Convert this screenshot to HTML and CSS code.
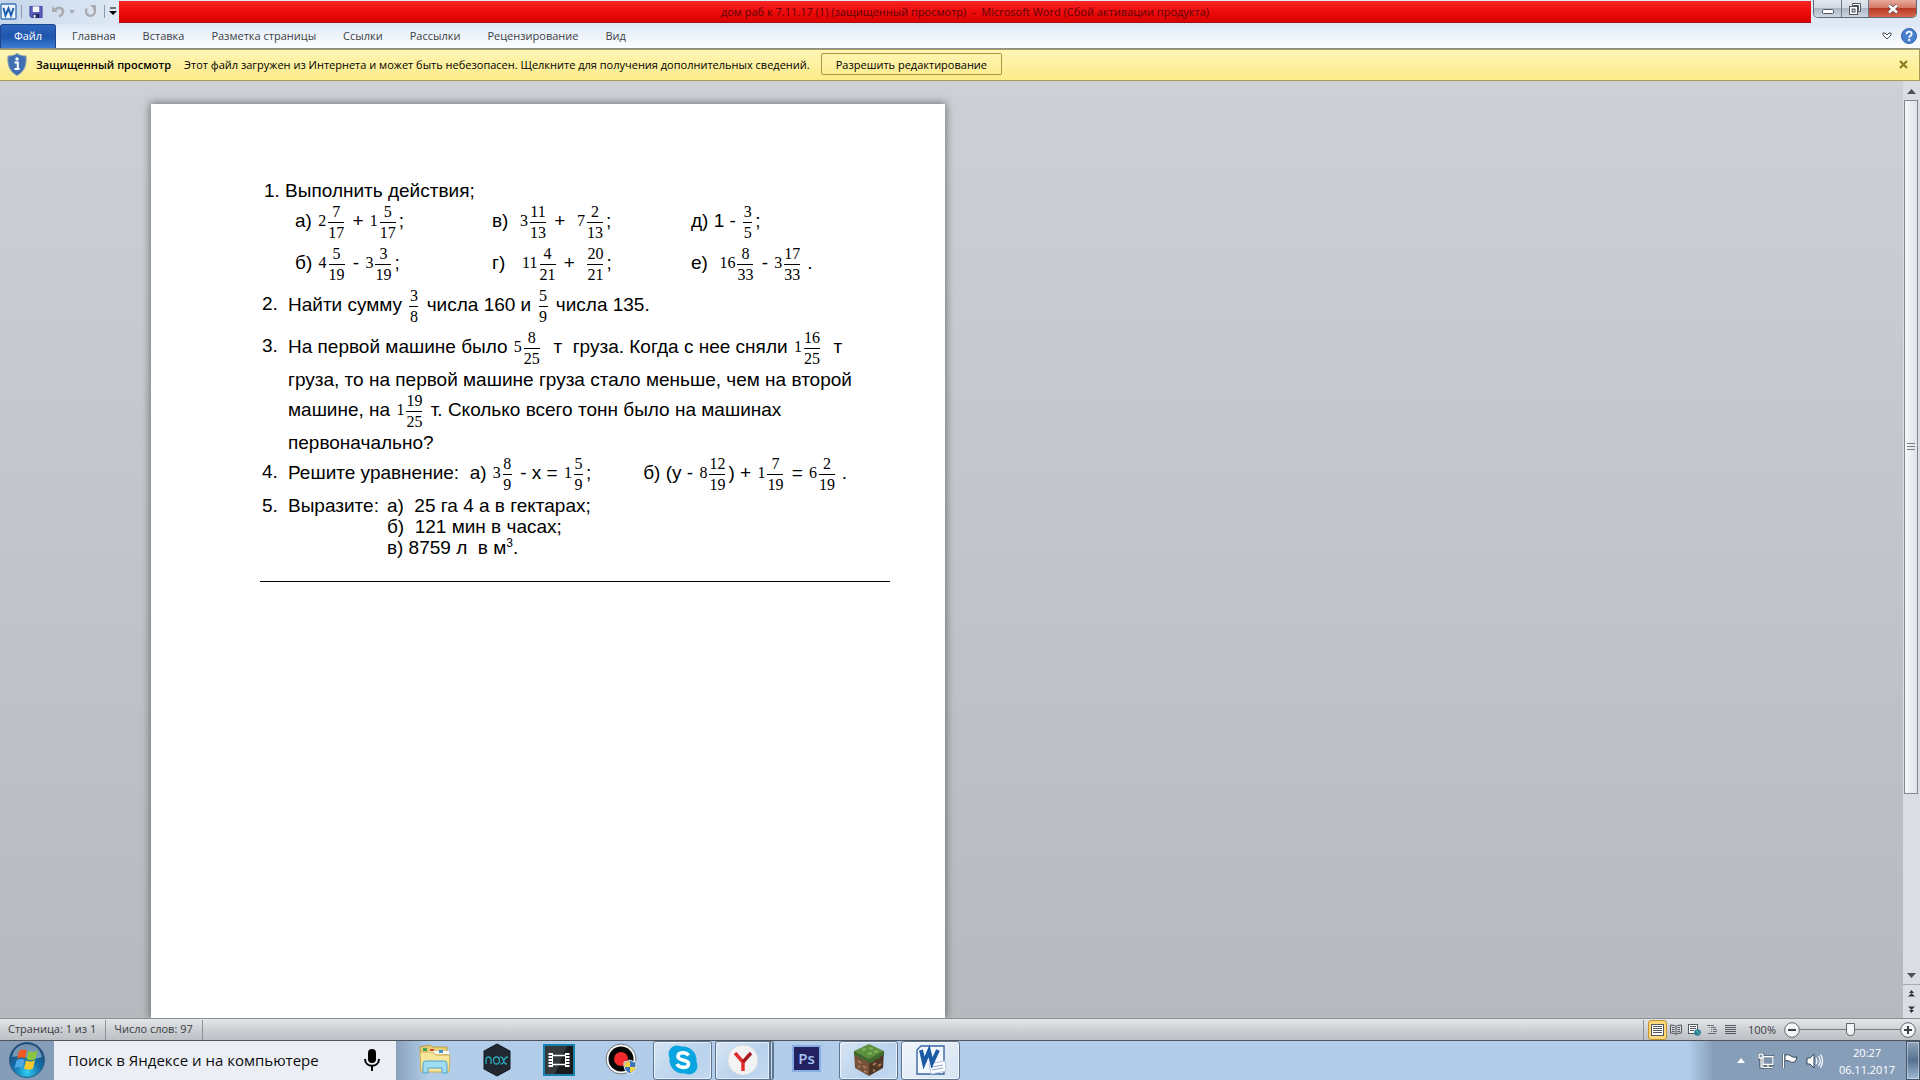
FILE: index.html
```html
<!DOCTYPE html>
<html lang="ru">
<head>
    <meta charset="UTF-8">
    <meta name="viewport" content="width=device-width, initial-scale=1.0">
    <title>дом раб к 7.11.17 (1) - Microsoft Word</title>
    <link rel="stylesheet" href="styles.css">
</head>
<body>
    <header class="titlebar">
        <div class="quick">
            <svg class="word-icon" width="17" height="17" viewBox="0 0 17 17"><rect x="1" y="1" width="15" height="15" rx="1" fill="#eef5fc" stroke="#3d77b8" stroke-width="1.4"/><path d="M3.5 5l2 7.5L8.500 5.500l2.500 7L13.500 5" fill="none" stroke="#1b5fae" stroke-width="2"/></svg>
            <span class="sep"></span>
            <button class="tool" aria-label="Сохранить"><svg width="14" height="14" viewBox="0 0 15 14"><path d="M1 1h13v12H2.500L1 11.500z" fill="#5a5fc0" stroke="#3b3f93"/><path d="M4 1h7v6H4z" fill="#f4f6fd"/><path d="M4 9h7v4H4z" fill="#26295f"/><path d="M5 10h2v3H5z" fill="#fff"/></svg></button>
            <button class="tool undo" aria-label="Отменить"><svg width="13" height="13" viewBox="0 0 13 13"><path d="M3 4.500c4-3 8-1.500 8 2 0 2.500-2 4-4 5" fill="none" stroke="#a9acb1" stroke-width="2.600"/><path d="M0 1v6h6z" fill="#a9acb1"/></svg></button>
            <svg width="6" height="4" viewBox="0 0 6 4"><path d="M0 0h6L3 4z" fill="#a9acb1"/></svg>
            <button class="tool undo" aria-label="Повторить"><svg width="13" height="13" viewBox="0 0 13 13"><path d="M3 3.500a4.500 4.500 0 1 0 6.500-.5" fill="none" stroke="#a9acb1" stroke-width="2.400"/><path d="M6 0h6v6z" fill="#a9acb1"/></svg></button>
            <span class="sep last"></span>
            <svg width="8" height="9" viewBox="0 0 8 9"><path d="M1 1h6" stroke="#000"/><path d="M0 4h8L4 8z" fill="#000"/></svg>
        </div>
        <div class="title">дом раб к 7.11.17 (1) (защищенный просмотр)&nbsp; -&nbsp; Microsoft Word (Сбой активации продукта)</div>
        <div class="window-buttons">
            <button class="win-min" aria-label="Свернуть"><svg width="12" height="6" viewBox="0 0 12 6"><rect x=".5" y="1.500" width="11" height="4" rx="1" fill="#fff" stroke="#50555e"/></svg></button>
            <button class="win-max" aria-label="Развернуть"><svg width="12" height="12" viewBox="0 0 12 12"><path d="M3.500.5h8v8h-2v-6h-6z" fill="#fff" stroke="#50555e"/><rect x=".5" y="3.500" width="8" height="8" fill="#fff" stroke="#50555e"/><rect x="3" y="6" width="3" height="3" fill="#c8ccd3" stroke="#50555e"/></svg></button>
            <button class="win-close" aria-label="Закрыть"><svg width="12" height="10" viewBox="0 0 12 10"><path d="M2 1.500l8 7M10 1.500l-8 7" stroke="#5b4a50" stroke-width="4"/><path d="M2 1.500l8 7M10 1.500l-8 7" stroke="#fff" stroke-width="2.500"/></svg></button>
        </div>
    </header>

    <nav class="tabs">
        <button class="tab file">Файл</button>
        <button class="tab">Главная</button>
        <button class="tab">Вставка</button>
        <button class="tab">Разметка страницы</button>
        <button class="tab">Ссылки</button>
        <button class="tab">Рассылки</button>
        <button class="tab">Рецензирование</button>
        <button class="tab">Вид</button>
        <div class="tabs-right">
            <svg width="10" height="8" viewBox="0 0 10 8"><path d="M1 1h2l2 2 2-2h2v2L5 7 1 3z" fill="#fff" stroke="#4a4e55"/></svg>
            <button class="help" aria-label="Справка"><svg width="16" height="16" viewBox="0 0 16 16"><circle cx="8" cy="8" r="7.500" fill="#4a7fd0" stroke="#3563ae"/><path d="M5.500 6.200c0-3.500 5.200-3.200 5.200-.3 0 1.800-2.500 1.800-2.500 3.900" fill="none" stroke="#fff" stroke-width="1.800"/><circle cx="8.200" cy="12" r="1.200" fill="#fff"/></svg></button>
        </div>
    </nav>

    <div class="notice">
        <svg width="20" height="23" viewBox="0 0 20 23"><path d="M10 .5c3 2 6 2.500 9 2.500.8 9-1.500 15.500-9 19.500C2.500 18.500.2 12 1 3c3 0 6-.5 9-2.500z" fill="#3f6fb0" stroke="#8ba3b5"/><circle cx="10" cy="6" r="1.700" fill="#fff"/><path d="M7.500 9.500h3.300V16M7.500 16h5" fill="none" stroke="#fff" stroke-width="2"/></svg>
        <strong>Защищенный просмотр</strong>
        <span>Этот файл загружен из Интернета и может быть небезопасен. Щелкните для получения дополнительных сведений.</span>
        <button class="enable">Разрешить редактирование</button>
        <button class="notice-close" aria-label="Закрыть"><svg width="9" height="9" viewBox="0 0 9 9"><path d="M1 1l7 7M8 1L1 8" stroke="#8c7a1c" stroke-width="2.200"/></svg></button>
    </div>

    <main class="workspace">
        <div class="canvas">
            <article class="page">
                <div class="line first">1. Выполнить действия;</div>
                <div class="examples">
                    <div class="line tall">а) <i>2</i><b><u>7</u><u>17</u></b>&nbsp;+ <i>1</i><b><u>5</u><u>17</u></b>;</div>
                    <div class="line tall">в)&nbsp; <i>3</i><b><u>11</u><u>13</u></b>&nbsp;+&nbsp; <i>7</i><b><u>2</u><u>13</u></b>;</div>
                    <div class="line tall">д) 1 - <b><u>3</u><u>5</u></b>;</div>
                    <div class="line tall">б) <i>4</i><b><u>5</u><u>19</u></b>&nbsp;- <i>3</i><b><u>3</u><u>19</u></b>;</div>
                    <div class="line tall">г)&nbsp;&nbsp; <i>11</i><b><u>4</u><u>21</u></b>&nbsp;+&nbsp; <b><u>20</u><u>21</u></b>;</div>
                    <div class="line tall">е)&nbsp; <i>16</i><b><u>8</u><u>33</u></b>&nbsp;- <i>3</i><b><u>17</u><u>33</u></b>&thinsp;.</div>
                </div>
                <div class="task">
                    <span class="num">2.</span>
                    <div class="line tall">Найти сумму <b><u>3</u><u>8</u></b>&nbsp;числа 160 и <b><u>5</u><u>9</u></b>&nbsp;числа 135.</div>
                </div>
                <div class="task">
                    <span class="num">3.</span>
                    <div>
                        <div class="line tall">На первой машине было <i>5</i><b><u>8</u><u>25</u></b>&nbsp; т&nbsp; груза. Когда с нее сняли <i>1</i><b><u>16</u><u>25</u></b>&nbsp; т</div>
                        <div class="line">груза, то на первой машине груза стало меньше, чем на второй</div>
                        <div class="line tall">машине, на <i>1</i><b><u>19</u><u>25</u></b>&nbsp;т. Сколько всего тонн было на машинах</div>
                        <div class="line">первоначально?</div>
                    </div>
                </div>
                <div class="task">
                    <span class="num">4.</span>
                    <div class="equations">
                        <div class="line tall">Решите уравнение:&nbsp; а) <i>3</i><b><u>8</u><u>9</u></b>&nbsp;- х = <i>1</i><b><u>5</u><u>9</u></b>;</div>
                        <div class="line tall">б) (у - <i>8</i><b><u>12</u><u>19</u></b>) + <i>1</i><b><u>7</u><u>19</u></b>&nbsp;= <i>6</i><b><u>2</u><u>19</u></b>&thinsp;.</div>
                    </div>
                </div>
                <div class="task short">
                    <span class="num">5.</span>
                    <div class="convert">
                        <div class="line">Выразите:</div>
                        <div>
                            <div class="line">а)&nbsp; 25 га 4 а в гектарах;</div>
                            <div class="line">б)&nbsp; 121 мин в часах;</div>
                            <div class="line">в) 8759 л&nbsp; в м<sup>3</sup>.</div>
                        </div>
                    </div>
                </div>
                <hr>
            </article>
        </div>
        <div class="scrollbar">
            <button aria-label="Вверх"><svg width="9" height="5" viewBox="0 0 9 5"><path d="M0 5h9L4.500 0z" fill="#4c5057"/></svg></button>
            <div class="track"><div class="thumb"><span></span><span></span><span></span></div></div>
            <button aria-label="Вниз"><svg width="9" height="5" viewBox="0 0 9 5"><path d="M0 0h9L4.500 5z" fill="#4c5057"/></svg></button>
            <button class="jump" aria-label="Предыдущая страница"><svg width="7" height="7" viewBox="0 0 7 7"><path d="M3.500 0L6 3H1zM3.500 3L7 6.500H0z" fill="#33363b"/></svg></button>
            <button aria-label="Следующая страница"><svg width="7" height="7" viewBox="0 0 7 7"><path d="M0 .5h7L3.500 4zM1 4h5L3.500 7z" fill="#33363b"/></svg></button>
        </div>
    </main>

    <footer class="status">
        <span class="cell">Страница: 1 из 1</span>
        <span class="cell">Число слов: 97</span>
        <div class="views">
            <button class="view active" aria-label="Разметка страницы"><svg width="13" height="12" viewBox="0 0 13 12"><rect x=".5" y=".5" width="12" height="11" fill="#fff" stroke="#55585e"/><path d="M2 2.500h9M2 4.500h9M2 6.500h9M2 8.500h9" stroke="#55585e"/></svg></button>
            <button class="view" aria-label="Режим чтения"><svg width="12" height="11" viewBox="0 0 12 11"><path d="M.5 1l4 .5L6 2.500l1.500-1 4-.5v8l-4 .5L6 10.500l-1.500-1-4-.5zM6 2.500v8M2 3.500h2.500M2 5.500h2.500M2 7.500h2.500M7.500 3.500H10M7.500 5.500H10M7.500 7.500H10" fill="none" stroke="#55585e"/></svg></button>
            <button class="view" aria-label="Веб-документ"><svg width="13" height="12" viewBox="0 0 13 12"><rect x=".5" y=".5" width="9" height="9" fill="#fff" stroke="#55585e"/><path d="M2 2.500h6M2 4.500h6M2 6.500h4" stroke="#55585e"/><circle cx="9.500" cy="8.500" r="3.300" fill="#2b7f9d"/><path d="M8 7l2 1 1 2" stroke="#5cba7e" fill="none"/></svg></button>
            <button class="view" aria-label="Структура"><svg width="11" height="10" viewBox="0 0 11 10"><path d="M0 .5h7M2 2.500h1M4 2.500h5M4 4.500h1M6 4.500h4M4 6.500h1M6 6.500h4M1 8.500h8" stroke="#6c6f75"/></svg></button>
            <button class="view" aria-label="Черновик"><svg width="11" height="10" viewBox="0 0 11 10"><path d="M0 .5h11M0 2.500h11M0 4.500h11M0 6.500h11M0 8.500h11" stroke="#55585e"/></svg></button>
        </div>
        <label class="percent" for="zoom">100%</label>
        <button class="round" aria-label="Уменьшить"><svg width="16" height="16" viewBox="0 0 16 16"><circle cx="8" cy="8" r="7.300" fill="#f4f5f7" stroke="#62666d"/><path d="M4 8h8" stroke="#3d4046" stroke-width="2"/></svg></button>
        <input class="zoom" id="zoom" type="range" min="0" max="100" value="50">
        <button class="round" aria-label="Увеличить"><svg width="16" height="16" viewBox="0 0 16 16"><circle cx="8" cy="8" r="7.300" fill="#f4f5f7" stroke="#62666d"/><path d="M4 8h8M8 4v8" stroke="#3d4046" stroke-width="2"/></svg></button>
    </footer>

    <div class="taskbar">
        <button class="start" aria-label="Пуск">
            <svg width="38" height="38" viewBox="0 0 38 38">
                <defs><radialGradient id="orb" cx=".5" cy=".85" r=".8"><stop offset="0" stop-color="#2fd0f5"/><stop offset=".45" stop-color="#1573ad"/><stop offset="1" stop-color="#17426f"/></radialGradient></defs>
                <circle cx="19" cy="19" r="17.500" fill="url(#orb)" stroke="#2f5f85"/>
                <path d="M4 16C6 6 13 3 19 3s13 3 15 13c-9 4-21-3-30 0z" fill="#fff" opacity=".4"/>
                <path d="M11 10c3-2 5-2 8-.5l-2 8c-3-1.500-5-1.500-8 .5z" fill="#ee5a24"/>
                <path d="M20.500 10c3 1.500 6 1.500 9-.5l-2 8.500c-3 2-6 1.500-9 0z" fill="#8cc63e"/>
                <path d="M8.500 19.500c3-2 5-2 8-.5l-2 8c-3-1.500-5-1.500-8 .5z" fill="#4fa8e8"/>
                <path d="M18 19.500c3 1.500 6 1.500 9-.5l-2 8.500c-3 2-6 1.500-9 0z" fill="#fcc92c"/>
            </svg>
        </button>
        <div class="search">
            <input type="text" aria-label="Поиск" placeholder="Поиск в Яндексе и на компьютере">
            <button aria-label="Голосовой поиск"><svg width="18" height="24" viewBox="0 0 18 24"><rect x="5" y="1" width="8" height="14" rx="4"/><path d="M2 11c0 9 14 9 14 0M9 18v5" fill="none" stroke="#000" stroke-width="2"/></svg></button>
        </div>
        <div class="apps">
            <button class="app" aria-label="Проводник"><svg width="34" height="32" viewBox="0 0 34 32"><path d="M2 3l10-2 3 2h14v22H3z" fill="#e6cc72" stroke="#b99b49"/><path d="M5 4h4v3H5z" fill="#3fa653"/><path d="M12 5h4v3h-4z" fill="#d04b32"/><path d="M10 7h21v3H10z" fill="#fff"/><path d="M21 6h4v3h-4z" fill="#3d8fc4"/><path d="M2 8h13l3 3h14l-1 17H3z" fill="#f6e59b" stroke="#cdae58"/><path d="M5 29V20q0-3 3-3h18q3 0 3 3v9h-5v-5H10v5z" fill="#9fdcf2" stroke="#4da4cc"/></svg></button>
            <button class="app" aria-label="Nox"><svg width="32" height="34" viewBox="0 0 32 34"><path d="M16 1l13 7v18l-13 7L3 26V8z" fill="#232830" stroke="#111820"/><path d="M5 21v-4q0-3 2.500-3t2.500 3v4M19.500 14q2 0 3 3.500 1 3.500 3.500 3.500M27 14q-3 0-4 3.500-1 3.500-3.500 3.500" fill="none" stroke="#2aa7bb" stroke-width="1.300"/><ellipse cx="15.500" cy="17.500" rx="3" ry="3.500" fill="none" stroke="#2aa7bb" stroke-width="1.300"/></svg></button>
            <button class="app" aria-label="Movie Studio"><svg width="32" height="32" viewBox="0 0 32 32"><rect x="1" y="1" width="30" height="30" fill="#191b1d" stroke="#1680ad" stroke-width="2"/><path d="M2 2h22L12 30H2z" fill="#34383b"/><path d="M10 11.500h12M10 20.500h12" stroke="#fff" stroke-width="1.500"/><path d="M7.500 9v14M24.500 9v14" stroke="#fff" stroke-width="4" stroke-dasharray="2 1"/><path d="M9.500 9v14M22.500 9v14" stroke="#fff"/></svg></button>
            <button class="app" aria-label="Запись экрана"><svg width="34" height="34" viewBox="0 0 34 34"><circle cx="17" cy="16" r="15" fill="#f5f5f5" stroke="#777"/><circle cx="17" cy="16" r="12.500" fill="#050505"/><circle cx="17" cy="16" r="7" fill="#f02a2d"/><path d="M26 17q3 2 6 2 1 9-6 12-7-3-6-12 3 0 6-2z" fill="#3b78bb" stroke="#eee"/><path d="M26 18v6h-5.500v-4zM26 24h5.500q-1 4-5.500 6z" fill="#f5d245"/></svg></button>
            <button class="app open" aria-label="Skype"><svg width="32" height="32" viewBox="0 0 32 32"><circle cx="10" cy="10" r="8.500" fill="#08a5e1"/><circle cx="22" cy="22" r="8.500" fill="#08a5e1"/><circle cx="16" cy="16" r="13.500" fill="#08a5e1"/><path d="M21.500 11.500C19 7.500 11 8 11 12.500c0 5 10.500 2.500 10.500 7.200 0 4.800-9 5-11.500.3" fill="none" stroke="#fff" stroke-width="3.600"/></svg></button>
            <button class="app open stacked" aria-label="Яндекс.Браузер"><svg width="32" height="32" viewBox="0 0 32 32"><circle cx="16" cy="16" r="15" fill="#f4f3f3" stroke="#d8dce3"/><path d="M8 9l8 9v9" fill="none" stroke="#e32b2c" stroke-width="3.400"/><path d="M24 9l-8 9" stroke="#a81820" stroke-width="3.400"/></svg></button>
            <button class="app" aria-label="Photoshop"><span class="ps">Ps</span></button>
            <button class="app open" aria-label="Minecraft"><svg width="32" height="34" viewBox="0 0 32 34"><path d="M16 1l15 7-15 8L1 8z" fill="#5d9140"/><path d="M1 8l15 8v17L2 25z" fill="#77513a"/><path d="M31 8l-15 8v17l14-8z" fill="#523625"/><path d="M1 8l15 8 15-8v4l-3 1-2 3-3 0-3 3-4 1-4-3-3 0-3-3-5-2z" fill="#3e6b2c"/><path d="M5 18l3 2M10 23l3 2M5 23l2 1M11 28l3 1M20 22l3-2M25 23l3-2M20 28l2-1" stroke="#a97c5b" stroke-width="2"/><path d="M9 7l4-1M16 5l4 1M15 11l4-1M21 9l4-1" stroke="#7db557" stroke-width="2"/></svg></button>
            <button class="app open front" aria-label="Word"><svg width="32" height="32" viewBox="0 0 32 32"><path d="M6 2h23v28H2V6z" fill="#f4f8fe" stroke="#3a669f" stroke-width="1.400"/><path d="M14 20l16-3 1 10-15 3z" fill="#fff" stroke="#b8c6df"/><path d="M17 23l11-2M17 26l11-2" stroke="#8aa3ce"/><path d="M6 6l3 13 5-12 3 12 6-13" fill="none" stroke="#1c5aa6" stroke-width="4"/></svg></button>
        </div>
        <div class="tray">
            <svg width="8" height="5" viewBox="0 0 8 5"><path d="M0 5h8L4 0z" fill="#fff"/></svg>
            <svg class="net" width="16" height="16" viewBox="0 0 16 16"><path d="M5 3.500h10v8H5zM6 14.500h8M10 12v2M1 1v4h4V1M3 5v9h3M2 0v2M4 0v2" fill="none" stroke="#2e4052" stroke-width="3"/><path d="M5 3.500h10v8H5zM6 14.500h8M10 12v2M1 1v4h4V1M3 5v9h3M2 0v2M4 0v2" fill="#7e93aa" stroke="#fff" stroke-width="1.300"/></svg>
            <svg width="16" height="16" viewBox="0 0 16 16"><path d="M1.500 1v14" stroke="#34485c" stroke-width="3"/><path d="M3 2q4-1 6 1 2 2 6 1-1 3-2 5-4 1-6-1-2-1-4 0z" fill="#fff" stroke="#34485c"/><path d="M1.500 1v14" stroke="#fff" stroke-width="1.500"/></svg>
            <svg width="17" height="16" viewBox="0 0 17 16"><path d="M1 5h3l4-4v14l-4-4H1z" fill="#fff" stroke="#34485c"/><path d="M10 5q2 3 0 6M12.500 3q3.500 5 0 10M14.500 1.500q4 6.500 0 13" fill="none" stroke="#fff" stroke-width="1.200"/></svg>
            <div class="clock"><time>20:27</time><time>06.11.2017</time></div>
            <button class="desktop" aria-label="Свернуть все окна"></button>
        </div>
    </div>
</body>
</html>
```
FILE: styles.css
```css
* {
    box-sizing: border-box;
}
body {
    margin: 0;
    height: 100vh;
    display: flex;
    flex-direction: column;
    overflow: hidden;
    font-family: "Open Sans", "Noto Sans", sans-serif;
    font-size: 11px;
    color: #1e1e1e;
}
button {
    margin: 0;
    padding: 0;
    border: none;
    background: none;
    font: inherit;
    color: inherit;
    display: flex;
    align-items: center;
    justify-content: center;
}
svg {
    display: block;
    flex: none;
}

/* title bar */
.titlebar {
    height: 24px;
    display: flex;
    align-items: flex-start;
    background: linear-gradient(to right, #c5d6ea, #dfe9f5 120px, #dfe9f5);
}
.quick {
    width: 119px;
    height: 23px;
    display: flex;
    align-items: center;
    gap: 4px;
}
.sep {
    width: 1px;
    height: 13px;
    background: #8d9bb0;
}
.sep.last {
    margin-left: 3px;
}
.quick .tool {
    margin-left: 3px;
}
.quick .undo {
    margin-left: 5px;
}
.title {
    flex: 1;
    height: 22px;
    margin-top: 1px;
    line-height: 21px;
    text-align: center;
    color: #5d0508;
    background: linear-gradient(#fa2424, #ee0c0c 50%, #d90000);
    border-bottom: 1px solid #a50d12;
}
.window-buttons {
    height: 18px;
    margin: 0 3px 0 2px;
    display: flex;
    border: 1px solid #5f6a78;
    border-top: none;
    border-radius: 0 0 5px 5px;
    overflow: hidden;
}
.window-buttons button {
    width: 27px;
    background: linear-gradient(#e3e8ef, #d3dae4 45%, #aeb8c6 50%, #cdd6e1);
    border-right: 1px solid #6c7785;
}
.window-buttons .win-min {
    padding-top: 4px;
    width: 28px;
}
.window-buttons .win-close {
    width: 47px;
    border-right: none;
    background: linear-gradient(#e6aa9c, #d67866 45%, #b93a25 50%, #d4674c);
}

/* ribbon tabs */
.tabs {
    height: 25px;
    display: flex;
    align-items: stretch;
    gap: 1px;
    padding-right: 3px;
    background: linear-gradient(#dde8f5, #f1f6fb 60%, #fbfdff);
    border-bottom: 1px solid #8b9097;
}
.tab {
    padding: 0 13px 2px;
    color: #3b3f46;
}
.tab.file {
    width: 56px;
    margin-right: 2px;
    padding: 0 0 2px;
    color: #fff;
    background: linear-gradient(#2f66bd, #1f55ab 50%, #3b7cd4);
    border: 1px solid #1c4690;
    border-bottom: none;
    border-radius: 3px 3px 0 0;
}
.tabs-right {
    margin-left: auto;
    display: flex;
    align-items: center;
    gap: 9px;
}

/* protected view bar */
.notice {
    height: 32px;
    display: flex;
    align-items: center;
    padding: 0 11px 2px 7px;
    color: #000;
    background: linear-gradient(#fff5b5, #fcec8a);
    border: 1px solid #a59c55;
    border-width: 1px 1px 1px 0;
}
.notice strong {
    margin: 0 13px 0 9px;
    font-weight: 600;
}
.enable {
    height: 22px;
    padding: 0 14px;
    margin-left: 11px;
    border: 1px solid #a8973c;
    border-radius: 2px;
}
.notice-close {
    margin-left: auto;
}

/* document area */
.workspace {
    flex: 1;
    min-height: 0;
    display: flex;
    background: linear-gradient(#cdd0d5, #b6b9bd);
}
.canvas {
    flex: 1;
    overflow: hidden;
    padding: 23px 0 0 151px;
}
.page {
    width: 794px;
    height: 100%;
    padding: 76px 55px 0 109px;
    background: #fff;
    box-shadow: 0 0 8px 1px rgba(50, 53, 60, 0.6);
    font-family: "Liberation Sans", Arial, sans-serif;
    font-size: 19px;
    color: #000;
}
.line {
    height: 21px;
    line-height: 21px;
    white-space: pre;
}
.line.tall {
    height: 42px;
    padding-bottom: 4px;
    display: flex;
    align-items: center;
}
.first {
    padding-left: 4px;
}
.examples {
    display: grid;
    grid-template-columns: 197px 199px auto;
    padding-left: 35px;
}
.task {
    display: flex;
    padding-left: 2px;
}
.num {
    width: 26px;
    line-height: 38px;
}
.short .num {
    line-height: 21px;
}

/* mixed numbers */
.line i,
.line b {
    font-family: "Liberation Serif", "Times New Roman", serif;
    font-size: 16px;
    font-style: normal;
    font-weight: normal;
}
.line i {
    margin-left: 1px;
}
.line b {
    min-width: 9px;
    margin: 4px 3px 0 2px;
    text-align: center;
}
.line u {
    display: block;
    line-height: 20px;
    text-decoration: none;
}
.line u + u {
    border-top: 1px solid #000;
}
.equations,
.convert {
    display: flex;
}
.equations {
    gap: 52px;
}
.convert {
    gap: 8px;
}
.line sup {
    font-size: 12px;
    line-height: 0;
}
.page hr {
    margin: 23px 0 0;
    border: none;
    border-top: 1px solid #000;
}

/* scrollbar */
.scrollbar {
    width: 17px;
    display: flex;
    flex-direction: column;
    background: #dadde3;
    padding-top: 2px;
}
.scrollbar button {
    height: 17px;
}
.scrollbar .jump {
    border-top: 1px solid #a6a9ae;
}
.track {
    flex: 1;
}
.thumb {
    height: 80%;
    margin: 0 2px 0 1px;
    display: flex;
    flex-direction: column;
    align-items: center;
    justify-content: center;
    gap: 2px;
    background: linear-gradient(to right, #f7f8fa, #dfe2e7);
    border: 1px solid #83878f;
}
.thumb span {
    width: 8px;
    height: 1px;
    background: #777b83;
}

/* status bar */
.status {
    height: 23px;
    display: flex;
    align-items: center;
    padding-right: 4px;
    color: #3a3c40;
    background: linear-gradient(#e4e7ea, #c9ccd0 60%, #bcc0c4);
    border-top: 1px solid #8c9096;
    border-bottom: 1px solid #50555c;
}
.cell {
    height: 20px;
    line-height: 18px;
    padding: 0 9px 0 8px;
    border-right: 1px solid #8f9297;
}
.views {
    margin-left: auto;
    height: 20px;
    display: flex;
    padding-left: 4px;
    border-left: 1px solid #8f9297;
}
.view {
    width: 18px;
}
.view.active {
    width: 19px;
    background: #fbd97b;
    border: 1px solid #c2922e;
    border-radius: 3px;
}
.percent {
    margin: 0 8px 0 9px;
}
.zoom {
    width: 100px;
    height: 16px;
    margin: 0;
    appearance: none;
    background: linear-gradient(#777b81, #777b81) center / 100% 1px no-repeat;
}
.zoom::-webkit-slider-thumb {
    appearance: none;
    width: 9px;
    height: 13px;
    background: #f3f4f6;
    border: 1px solid #62666d;
    border-radius: 1px 1px 5px 5px;
}

/* taskbar */
.taskbar {
    height: 39px;
    display: flex;
    background: #b1cdea;
}
.start {
    width: 54px;
    padding-bottom: 1px;
    background: #869db9;
}
.search {
    width: 342px;
    display: flex;
    align-items: center;
    padding: 0 15px 2px 14px;
    background: #ebeff5;
}
.search input {
    flex: 1;
    min-width: 0;
    padding: 0;
    border: none;
    outline: none;
    background: none;
    font: 15px "Open Sans", "Noto Sans", sans-serif;
}
.search input::placeholder {
    color: #0c0c0c;
    opacity: 1;
}
.apps {
    flex: 1;
    display: flex;
    gap: 3px;
    padding-left: 9px;
    background: linear-gradient(to right, #8aa1bc, #b1cdea 32px);
}
.app {
    width: 59px;
    padding-bottom: 2px;
}
.app.open {
    background: linear-gradient(135deg, #d7e5f4, #b9d2ec 60%, #c3d9f0);
    border: 1px solid #5d7590;
    border-radius: 3px;
    box-shadow: inset 0 0 0 1px rgba(255, 255, 255, 0.6);
}
.app.front {
    background: linear-gradient(135deg, #f0f5fa, #d5e3f3);
}
.app.stacked {
    border-right: 5px double #5d7590;
}
.ps {
    width: 29px;
    height: 27px;
    line-height: 22px;
    margin-bottom: 3px;
    font-size: 15px;
    font-weight: 600;
    color: #a9c8f5;
    background: #23215f;
    border: 2px solid #86aee2;
}
.tray {
    display: flex;
    align-items: center;
    padding-left: 49px;
    gap: 8px;
    color: #fff;
    background: linear-gradient(to right, #b1cdea, #879eb9 26px);
}
.net {
    margin-left: 5px;
}
.clock {
    margin-left: 8px;
    display: flex;
    flex-direction: column;
    align-items: center;
    line-height: 17px;
    font-size: 11px;
}
.desktop {
    width: 14px;
    height: 100%;
    margin-left: 3px;
    background: linear-gradient(#8fa3ba, #56718f 50%, #9fb9d4);
    border: 1px solid #42566c;
    box-shadow: inset 0 0 0 1px rgba(255, 255, 255, 0.4);
}
```
